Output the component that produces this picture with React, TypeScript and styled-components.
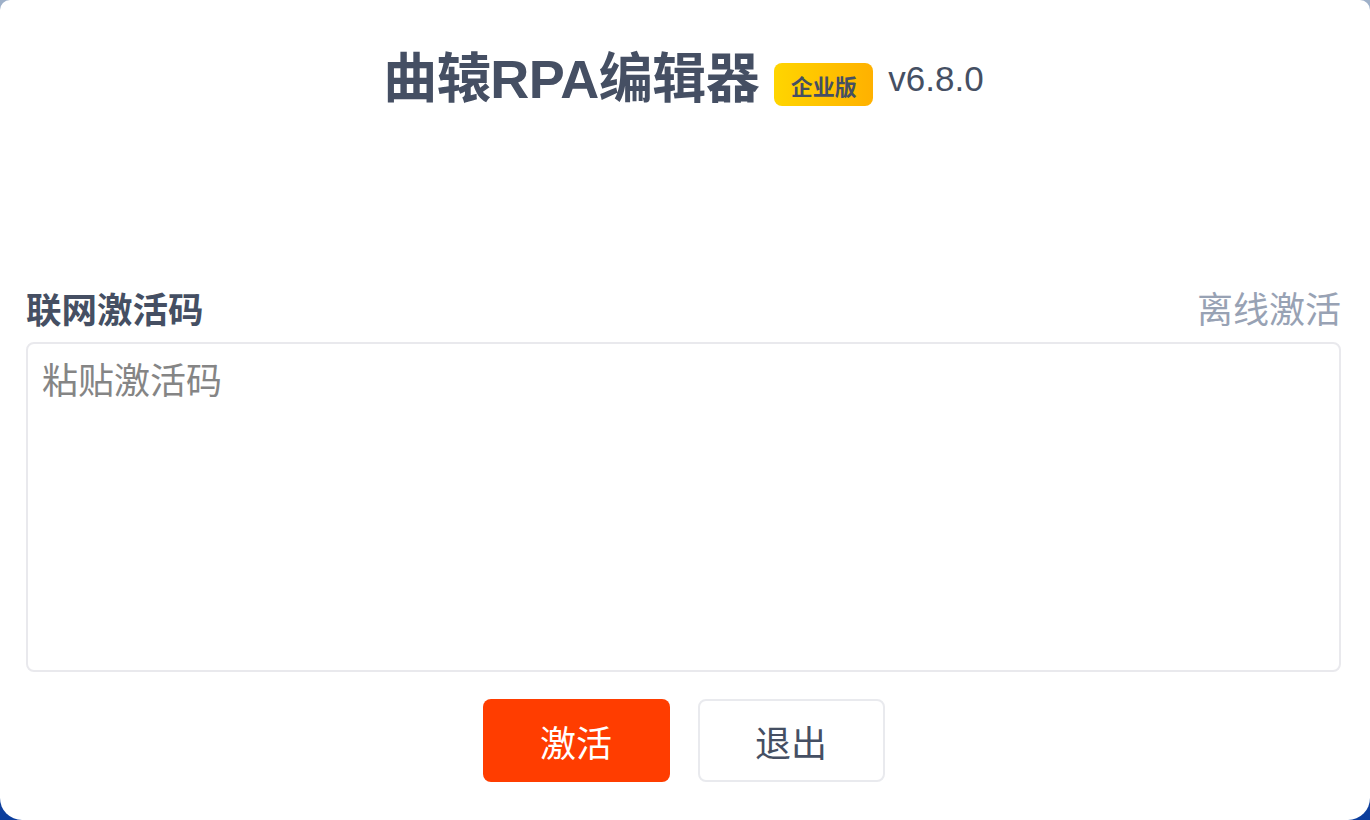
import styled, { createGlobalStyle } from "styled-components";
import { useState } from "react";

const GlobalStyle = createGlobalStyle`
  html, body {
    margin: 0;
    padding: 0;
    height: 100%;
  }
  body {
    background: linear-gradient(180deg, #9fb1c9 0%, #5a78ad 50%, #0b3d9c 100%);
    font-family: "Noto Sans CJK SC", "Noto Sans", sans-serif;
  }
  #root {
    height: 100%;
  }
`;

const Card = styled.div`
  box-sizing: border-box;
  height: 820px;
  background: #fff;
  border-radius: 10px 10px 22px 22px;
  padding: 36px 29px 37px 26px;
  display: flex;
  flex-direction: column;
`;

const Header = styled.div`
  display: flex;
  align-items: center;
  justify-content: center;
  gap: 15px;
  height: 80px;
`;

const Title = styled.h1`
  margin: 0;
  font-family: "Liberation Sans", "Noto Sans CJK SC", sans-serif;
  font-size: 54px;
  font-weight: 700;
  color: #454f63;
  letter-spacing: -0.5px;
  margin-top: -3px;
`;

const Badge = styled.span`
  display: inline-flex;
  align-items: center;
  justify-content: center;
  width: 99px;
  height: 43px;
  margin-top: 17px;
  border-radius: 8px;
  background: linear-gradient(90deg, #ffd500, #ffb100);
  color: #454f63;
  font-size: 22px;
  font-weight: 700;
`;

const Version = styled.span`
  font-family: "Liberation Sans", sans-serif;
  font-size: 35px;
  color: #454f63;
  margin-top: 6px;
`;

const FieldHead = styled.div`
  display: flex;
  align-items: center;
  justify-content: space-between;
  margin-top: 168px;
  height: 46px;
`;

const Label = styled.span`
  font-size: 35.5px;
  font-weight: 700;
  color: #454f63;
`;

const LinkText = styled.button`
  border: none;
  background: none;
  padding: 0;
  font-family: inherit;
  font-size: 36px;
  color: #98a2b4;
  cursor: pointer;
`;

const CodeInput = styled.textarea`
  box-sizing: border-box;
  margin-top: 12px;
  width: 100%;
  height: 330px;
  border: 2px solid #e9e9ed;
  border-radius: 8px;
  padding: 8px 14px;
  resize: none;
  outline: none;
  font-family: inherit;
  font-size: 36px;
  color: #333;

  &::placeholder {
    color: #858585;
  }
`;

const Actions = styled.div`
  display: flex;
  justify-content: center;
  gap: 28px;
  margin-top: 27px;
`;

const Button = styled.button<{ $primary?: boolean }>`
  box-sizing: border-box;
  width: 187px;
  height: 83px;
  border-radius: 8px;
  font-family: inherit;
  font-size: 36px;
  cursor: pointer;
  border: ${(p) => (p.$primary ? "none" : "2px solid #e9eaee")};
  background: ${(p) => (p.$primary ? "#ff3d00" : "#fff")};
  color: ${(p) => (p.$primary ? "#fff" : "#454f63")};
`;

function App() {
  const [code, setCode] = useState("");

  return (
    <>
      <GlobalStyle />
      <Card>
        <Header>
          <Title>曲辕RPA编辑器</Title>
          <Badge>企业版</Badge>
          <Version>v6.8.0</Version>
        </Header>

        <FieldHead>
          <Label>联网激活码</Label>
          <LinkText>离线激活</LinkText>
        </FieldHead>
        <CodeInput
          placeholder="粘贴激活码"
          value={code}
          onChange={(e) => setCode(e.target.value)}
        />

        <Actions>
          <Button $primary>激活</Button>
          <Button>退出</Button>
        </Actions>
      </Card>
    </>
  );
}

export default App;
